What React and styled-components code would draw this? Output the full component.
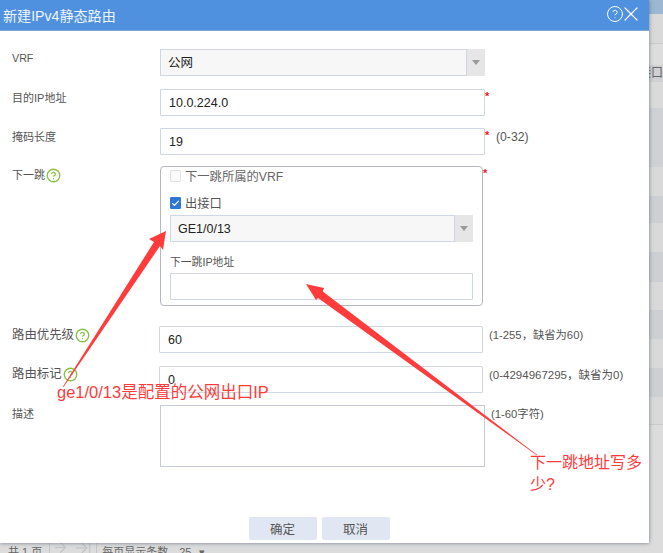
import React from "react";
import styled, {createGlobalStyle} from "styled-components";
import {ArrowRight, ArrowRightToLine, Check, CircleHelp, X} from "lucide-react";

const GlobalStyle = createGlobalStyle`
    html, body {
        margin: 0;
        padding: 0;
        background: #dcdcdc;
    }
    * {
        box-sizing: border-box;
    }
`;

const FONT = `"Liberation Sans", "Noto Sans CJK SC", sans-serif`;

const Page = styled.div`
    position: relative;
    width: 663px;
    height: 553px;
    overflow: hidden;
    display: flex;
    flex-direction: column;
    font-family: ${FONT};
    background: #dcdcdc;
`;

const BackRows = styled.div`
    flex: 1;
    display: flex;
    flex-direction: column;
`;

const BackRow = styled.div`
    height: ${props => props.$height}px;
    flex-shrink: 0;
    padding-left: 639px;
    background: ${props => props.$color};
    border-bottom: ${props => props.$line ? "1px solid #cacaca" : "none"};
    font-size: 12px;
    line-height: ${props => props.$height}px;
    color: #666;
    white-space: nowrap;
`;

const Pager = styled.div`
    height: 10px;
    flex-shrink: 0;
    display: flex;
    align-items: flex-start;
    padding-left: 8px;
    font-size: 11px;
    line-height: 18px;
    color: #666;
    white-space: nowrap;
`;

const PagerText = styled.span`
    margin-left: ${props => props.$left || 0}px;
`;

const PagerDivider = styled.span`
    width: 1px;
    height: 10px;
    margin: 0 ${props => props.$right}px 0 ${props => props.$left}px;
    background: #c6c6c6;
`;

const PagerIcon = styled.span`
    display: flex;
    margin: -4px 0 0 ${props => props.$left || 0}px;
    color: #c2c2c2;
`;

const Dialog = styled.div`
    position: absolute;
    left: 0;
    top: 0;
    width: 649px;
    height: 543px;
    display: flex;
    flex-direction: column;
    background: #fff;
    box-shadow: 0 0 4px rgba(60, 70, 90, 0.65);
`;

const Header = styled.div`
    height: 31px;
    flex-shrink: 0;
    display: flex;
    align-items: center;
    justify-content: space-between;
    padding: 0 6px 1px 3px;
    background: #4f91de;
    border-bottom: 1px solid #7fa9d8;
    color: #fff;
`;

const Title = styled.div`
    font-size: 14.1px;
    color: #eef4fb;
`;

const HeaderActions = styled.div`
    display: flex;
    align-items: center;
    margin-top: -1px;
`;

const CloseIcon = styled(X)`
    margin-left: -5px;
`;

const Form = styled.div`
    flex: 1;
    padding-top: 18px;
`;

const Row = styled.div`
    display: flex;
    align-items: flex-start;
    margin-top: ${props => props.$top || 0}px;
`;

const Label = styled.div`
    width: ${props => props.$width || 160}px;
    flex-shrink: 0;
    display: flex;
    align-items: center;
    gap: 1px;
    padding-left: 12px;
    margin-top: ${props => props.$offset || 0}px;
    font-size: ${props => props.$size || 11}px;
    line-height: 18px;
    color: #555;
`;

const Tip = styled(CircleHelp)`
    flex-shrink: 0;
    color: #8cc04b;
`;

const Input = styled.input`
    display: block;
    width: ${props => props.$width || 325}px;
    height: 27px;
    padding: 0 8px;
    border: 1px solid #cfd6e4;
    border-radius: 1px;
    outline: none;
    background: #fff;
    font-family: ${FONT};
    font-size: 12.5px;
    color: #222;
`;

const TextArea = styled.textarea`
    display: block;
    width: 325px;
    height: 62px;
    padding: 4px 8px;
    border: 1px solid #c5cad8;
    outline: none;
    resize: none;
    background: #fff;
    font-family: ${FONT};
    font-size: 12.5px;
`;

const Select = styled.div`
    display: flex;
    width: ${props => props.$width}px;
    height: 27px;
`;

const SelectValue = styled.div`
    flex: 1;
    padding-left: 7px;
    border: 1px solid #cfd6e4;
    background: #f7f7f7;
    font-size: 12.5px;
    line-height: 27px;
    color: #222;
`;

const SelectButton = styled.div`
    width: 18px;
    display: flex;
    align-items: center;
    justify-content: center;
    background: #e6e6e6;
    &::after {
        content: "";
        border-left: 4px solid transparent;
        border-right: 4px solid transparent;
        border-top: 5px solid #9a9a9a;
    }
`;

const Required = styled.span`
    width: 5px;
    flex-shrink: 0;
    font-size: 11px;
    font-weight: bold;
    line-height: 15px;
    color: #f01818;
`;

const Hint = styled.span`
    margin-left: 6px;
    font-size: ${props => props.$size || 11.3}px;
    line-height: 18px;
    color: #555;
    white-space: nowrap;
`;

const NextHopBox = styled.div`
    width: 323px;
    height: 140px;
    padding: 0 9px;
    border: 1px solid #b5b7c4;
    border-radius: 4px;
`;

const CheckRow = styled.div`
    display: flex;
    align-items: center;
    gap: 4px;
    height: 18px;
    margin-top: ${props => props.$top || 0}px;
    font-size: 12.3px;
    color: ${props => props.$muted ? "#666" : "#555"};
`;

const CheckBox = styled.span`
    width: 11px;
    height: 12px;
    display: flex;
    align-items: center;
    justify-content: center;
    border: 1px solid ${props => props.$checked ? "#2d78d6" : "#e2e2e2"};
    border-radius: 1px;
    background: ${props => props.$checked ? "#2d78d6" : "#fafafa"};
    color: #fff;
`;

const FieldLabel = styled.div`
    margin: 11px 0 2px;
    font-size: 10.8px;
    line-height: 18px;
    color: #555;
`;

const SubSelect = styled.div`
    margin-top: 3px;
`;

const Footer = styled.div`
    display: flex;
    justify-content: center;
    gap: 5px;
    padding: 0 11px 3px 0;
`;

const Button = styled.button`
    width: 68px;
    height: 23px;
    padding: 0;
    border: none;
    border-radius: 2px;
    background: #e1e7f2;
    font-family: ${FONT};
    font-size: 12.5px;
    color: #555;
`;

const Arrows = styled.svg`
    position: absolute;
    left: 0;
    top: 0;
    pointer-events: none;
`;

const Note = styled.div`
    position: absolute;
    left: ${props => props.$left}px;
    top: ${props => props.$top}px;
    width: ${props => props.$width}px;
    font-size: ${props => props.$size}px;
    line-height: 22px;
    color: #ff3b3b;
`;

const backRows = [
    {height: 14, color: "#9db7d3"},
    {height: 30, color: "#d9d9d9", line: true},
    {height: 21, color: "#dddddd"},
    {height: 17, color: "#d0d0d2", text: "接口"},
    {height: 26, color: "#dadada"},
    {height: 59, color: "#d0d1d5"},
    {height: 29, color: "#d9d9d9"},
    {height: 27, color: "#cdcfd3"},
    {height: 29, color: "#d9d9d9"},
    {height: 30, color: "#cdcfd3"},
    {height: 28, color: "#d9d9d9"},
    {height: 29, color: "#cdcfd3"},
    {height: 29, color: "#d9d9d9"},
    {height: 29, color: "#cdcfd3"},
    {height: 28, color: "#d9d9d9", line: true}
];

const App = () => (
    <Page>
        <GlobalStyle/>
        <BackRows>
            {backRows.map((row, i) => (
                <BackRow key={i} $height={row.height} $color={row.color} $line={row.line}>
                    {row.text}
                </BackRow>
            ))}
        </BackRows>
        <Pager>
            <PagerText>共 1 页</PagerText>
            <PagerDivider $left={7} $right={2}/>
            <PagerIcon><ArrowRight size={17} strokeWidth={1.5}/></PagerIcon>
            <PagerIcon $left={5}><ArrowRightToLine size={18} strokeWidth={1.5}/></PagerIcon>
            <PagerDivider $left={4} $right={5}/>
            <PagerText>每页显示条数</PagerText>
            <PagerText $left={11}>25</PagerText>
            <PagerText $left={8}>▾</PagerText>
        </Pager>

        <Dialog>
            <Header>
                <Title>新建IPv4静态路由</Title>
                <HeaderActions>
                    <CircleHelp size={18} strokeWidth={1.3}/>
                    <CloseIcon size={24} strokeWidth={1.2}/>
                </HeaderActions>
            </Header>
            <Form>
                <Row>
                    <Label $size={10.7}>VRF</Label>
                    <Select $width={325}>
                        <SelectValue>公网</SelectValue>
                        <SelectButton/>
                    </Select>
                </Row>
                <Row $top={13}>
                    <Label>目的IP地址</Label>
                    <Input defaultValue="10.0.224.0"/>
                    <Required>*</Required>
                </Row>
                <Row $top={12}>
                    <Label>掩码长度</Label>
                    <Input defaultValue="19"/>
                    <Required>*</Required>
                    <Hint $size={12.2}>(0-32)</Hint>
                </Row>
                <Row $top={11}>
                    <Label>下一跳<Tip size={15} strokeWidth={2.2}/></Label>
                    <NextHopBox>
                        <CheckRow $muted>
                            <CheckBox/>
                            下一跳所属的VRF
                        </CheckRow>
                        <CheckRow $top={9}>
                            <CheckBox $checked><Check size={11} strokeWidth={3}/></CheckBox>
                            出接口
                        </CheckRow>
                        <SubSelect>
                            <Select $width={303}>
                                <SelectValue>GE1/0/13</SelectValue>
                                <SelectButton/>
                            </Select>
                        </SubSelect>
                        <FieldLabel>下一跳IP地址</FieldLabel>
                        <Input $width={303}/>
                    </NextHopBox>
                    <Required>*</Required>
                </Row>
                <Row $top={20}>
                    <Label $width={159} $size={12.4}>路由优先级<Tip size={15} strokeWidth={2.2}/></Label>
                    <Input $width={324} defaultValue="60"/>
                    <Hint>(1-255，缺省为60)</Hint>
                </Row>
                <Row $top={13}>
                    <Label $width={159} $size={12.4} $offset={-1}>路由标记<Tip size={15} strokeWidth={2.2}/></Label>
                    <Input $width={324} defaultValue="0"/>
                    <Hint $size={11.5}>(0-4294967295，缺省为0)</Hint>
                </Row>
                <Row $top={12}>
                    <Label>描述</Label>
                    <TextArea/>
                    <Hint>(1-60字符)</Hint>
                </Row>
            </Form>
            <Footer>
                <Button>确定</Button>
                <Button>取消</Button>
            </Footer>
        </Dialog>

        <Arrows width="663" height="553" viewBox="0 0 663 553">
            <polygon fill="#ff3b3b" points="63,386.5 154,242 149,239 166,231 163,250 160,246 63.6,387"/>
            <polygon fill="#ff3b3b" points="537,454.8 322.8,291.5 324,288 306,284 316,300 318,297.9 536.6,455.2"/>
        </Arrows>
        <Note $left={57} $top={381} $width={230} $size={16.5}>ge1/0/13是配置的公网出口IP</Note>
        <Note $left={530} $top={452} $width={116} $size={16}>下一跳地址写多少?</Note>
    </Page>
);

export default App;
